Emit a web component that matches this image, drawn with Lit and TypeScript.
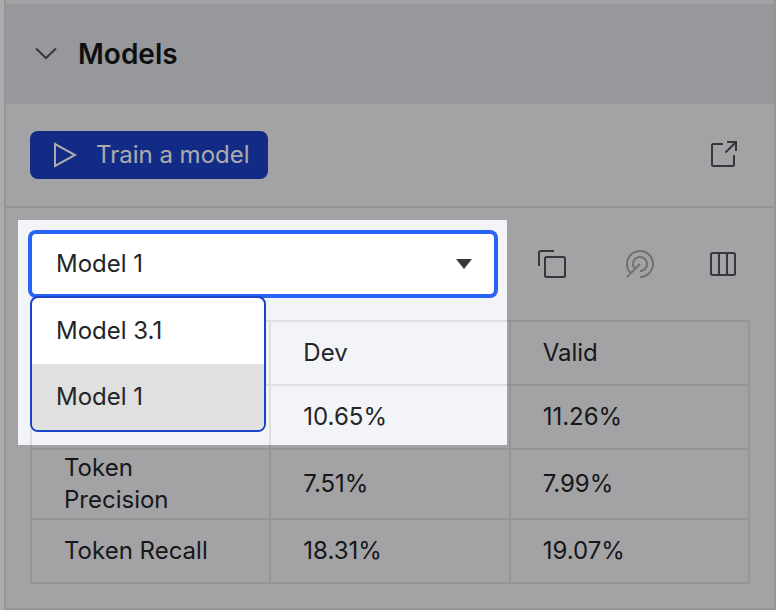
import { LitElement, html, css, svg } from "lit";
import { customElement, state } from "lit/decorators.js";

interface Metric {
  name: string;
  dev: string;
  valid: string;
}

const METRICS: Metric[] = [
  { name: "", dev: "10.65%", valid: "11.26%" },
  { name: "Token Precision", dev: "7.51%", valid: "7.99%" },
  { name: "Token Recall", dev: "18.31%", valid: "19.07%" },
];

const MODELS = ["Model 3.1", "Model 1"];

const icons = {
  chevron: svg`<path d="M6 10.500 16 20 26 10.500" />`,
  play: svg`<path d="M7 5v22l20-11z" />`,
  external: svg`<path d="M15 5H5.500A1.500 1.500 0 0 0 4 6.500v19A1.500 1.500 0 0 0 5.500 27h19a1.500 1.500 0 0 0 1.500-1.500V16M19 3h9v9M28 3 17.500 13.500" />`,
  copy: svg`<rect x="9" y="9" width="20" height="20" rx="1.500" /><path d="M3 18V4.500A1.500 1.500 0 0 1 4.500 3H18" />`,
  target: svg`<path d="M18 29A13 13 0 1 0 8.800 25.200M18 23A7 7 0 1 0 13 20.900M18 16 5 29" />`,
  columns: svg`<rect x="3" y="5" width="24" height="22" rx="1.500" /><path d="M11 5v22M19 5v22" />`,
};

@customElement("app-root")
export class AppRoot extends LitElement {
  @state() private selected = "Model 1";

  static styles = css`
    :host {
      display: block;
      position: relative;
      box-sizing: border-box;
      min-height: 100vh;
      padding-left: 4px;
      overflow: hidden;
      background: #ffffff;
      color: #232527;
      font: 400 24px/32px Inter, "Liberation Sans", sans-serif;
    }
    *, *::before { box-sizing: border-box; }
    .panel {
      padding-top: 4px;
      border: 2px solid #dedfdf;
      border-top: 0;
      background: #f3f4f8;
    }
    .header {
      display: flex;
      align-items: center;
      gap: 16px;
      height: 100px;
      padding: 0 24px;
      background: #e1e3e7;
    }
    h2 {
      margin: 0;
      font-size: 28px;
      font-weight: 600;
      color: #16171a;
    }
    button {
      display: flex;
      align-items: center;
      justify-content: center;
      padding: 0;
      border: 0;
      background: none;
      color: #505358;
      font: inherit;
      cursor: pointer;
    }
    .icon {
      width: 32px;
      height: 32px;
      fill: none;
      stroke: currentColor;
      stroke-width: 2;
    }
    .actions {
      display: flex;
      align-items: center;
      justify-content: space-between;
      padding: 27px 24px;
      border-bottom: 2px solid #dedfdf;
    }
    .train {
      gap: 16px;
      height: 48px;
      padding: 0 18px;
      border-radius: 8px;
      background: #1a40c8;
      color: #ffffff;
    }
    .tool {
      flex: none;
      width: 52px;
      height: 48px;
    }
    .tool:disabled { color: #a8a9ac; }
    .body {
      display: grid;
      gap: 24px;
      padding: 24px;
    }
    .toolbar {
      display: flex;
      align-items: center;
      gap: 30px;
    }
    .tools {
      display: flex;
      gap: 34px;
    }
    .picker {
      position: relative;
      display: grid;
      flex: 1;
      align-items: center;
    }
    .select, .caret { grid-area: 1 / 1; }
    .select {
      width: 100%;
      height: 64px;
      padding: 0 24px;
      appearance: none;
      border: 2px solid #2962f6;
      border-radius: 6px;
      outline: 0;
      box-shadow: 0 0 0 2px #2962f6;
      background: #ffffff;
      color: inherit;
      font: inherit;
    }
    .caret {
      justify-self: end;
      width: 16px;
      height: 10px;
      margin-right: 24px;
      fill: #343b40;
      pointer-events: none;
    }
    .menu {
      position: absolute;
      z-index: 1;
      top: 100%;
      left: 0;
      width: 236px;
      margin: 0;
      padding: 0;
      overflow: hidden;
      border: 2px solid #1a44c8;
      border-radius: 8px;
      background: #ffffff;
      list-style: none;
    }
    .option {
      padding: 17px 24px;
      cursor: pointer;
    }
    .chosen { background: #e0e0e0; }
    .spotlight {
      position: absolute;
      z-index: 2;
      top: -12px;
      left: -12px;
      right: -11px;
      height: 225px;
      box-shadow: 0 0 0 4000px rgba(0, 0, 0, 0.33);
      pointer-events: none;
    }
    table {
      width: 100%;
      table-layout: fixed;
      border-collapse: collapse;
    }
    th, td {
      height: 64px;
      padding: 2px 32px;
      border: 2px solid #dedfdf;
      font-weight: 400;
      text-align: left;
    }
  `;

  private icon(name: keyof typeof icons) {
    return html`<svg class="icon" viewBox="0 0 32 32" aria-hidden="true">${icons[name]}</svg>`;
  }

  render() {
    return html`
      <section class="panel">
        <header class="header">
          <button aria-label="Collapse">${this.icon("chevron")}</button>
          <h2>Models</h2>
        </header>
        <div class="actions">
          <button class="train">${this.icon("play")}<span>Train a model</span></button>
          <button class="tool" aria-label="Open in new window">${this.icon("external")}</button>
        </div>
        <div class="body">
          <div class="toolbar">
            <div class="picker">
              <select
                class="select"
                aria-label="Model"
                .value=${this.selected}
                @change=${(e: Event) => (this.selected = (e.target as HTMLSelectElement).value)}
              >
                ${MODELS.map((m) => html`<option value=${m} ?selected=${m === this.selected}>${m}</option>`)}
              </select>
              <svg class="caret" viewBox="0 0 16 10" aria-hidden="true"><path d="M0 0h16L8 10z" /></svg>
              <ul class="menu" role="listbox" aria-label="Models">
                ${MODELS.map(
                  (m) => html`<li
                    class=${m === this.selected ? "option chosen" : "option"}
                    role="option"
                    aria-selected=${m === this.selected}
                    @click=${() => (this.selected = m)}
                  >${m}</li>`
                )}
              </ul>
              <div class="spotlight"></div>
            </div>
            <div class="tools">
              <button class="tool" aria-label="Duplicate">${this.icon("copy")}</button>
              <button class="tool" aria-label="Deploy" disabled>${this.icon("target")}</button>
              <button class="tool" aria-label="Columns">${this.icon("columns")}</button>
            </div>
          </div>
          <table>
            <thead>
              <tr><td></td><th scope="col">Dev</th><th scope="col">Valid</th></tr>
            </thead>
            <tbody>
              ${METRICS.map(
                (m) => html`<tr><th scope="row">${m.name}</th><td>${m.dev}</td><td>${m.valid}</td></tr>`
              )}
            </tbody>
          </table>
        </div>
      </section>
    `;
  }
}
